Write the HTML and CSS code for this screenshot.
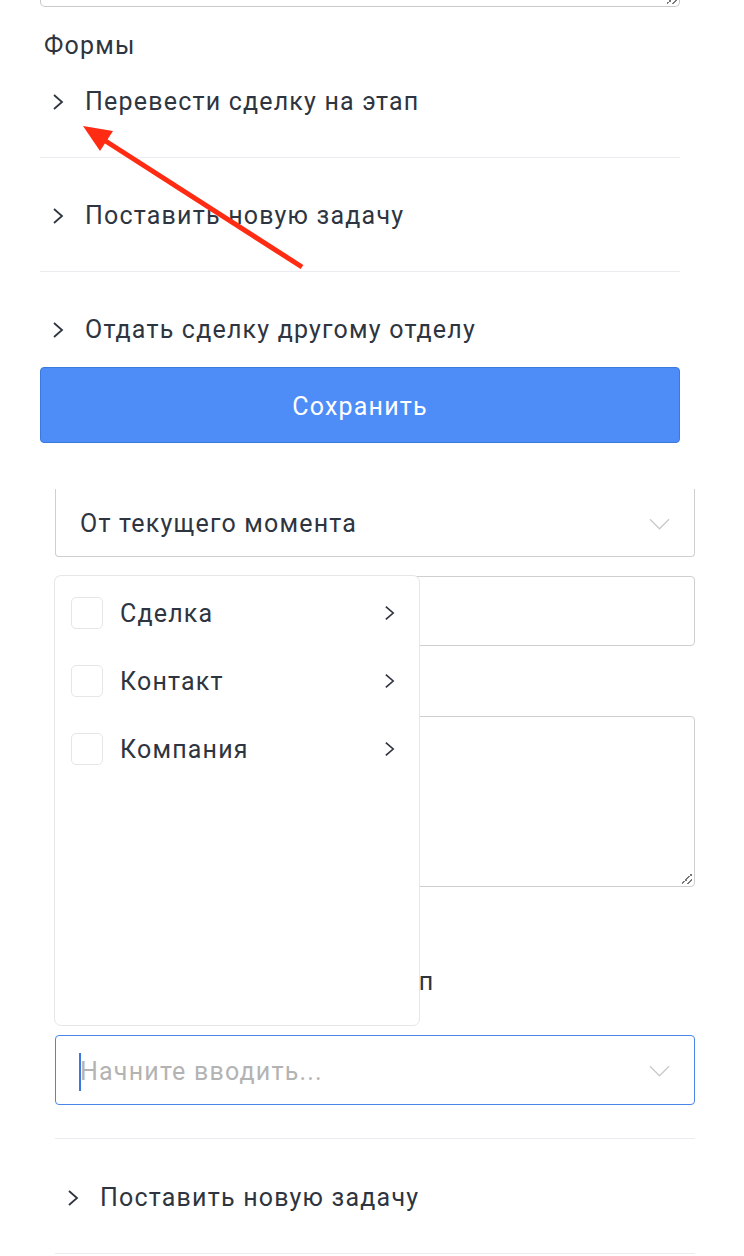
FILE: index.html
```html
<!DOCTYPE html>
<html lang="ru">
<head>
    <meta charset="UTF-8">
    <meta name="viewport" content="width=device-width, initial-scale=1.0">
    <title>Формы</title>
    <link rel="stylesheet" href="styles.css">
</head>
<body>
<div class="page">

    <!-- upper part: forms list with save button -->
    <div class="forms-top">
        <div class="textarea-end"><span class="grip"></span></div>

        <div class="forms-title">Формы</div>

        <div class="acc-list">
            <div class="acc-item">
                <svg class="chev" viewBox="0 0 12 18"><polyline points="2,2 10,9 2,16"/></svg>
                <span>Перевести сделку на этап</span>
            </div>
            <div class="acc-item">
                <svg class="chev" viewBox="0 0 12 18"><polyline points="2,2 10,9 2,16"/></svg>
                <span>Поставить новую задачу</span>
            </div>
            <div class="acc-item">
                <svg class="chev" viewBox="0 0 12 18"><polyline points="2,2 10,9 2,16"/></svg>
                <span>Отдать сделку другому отделу</span>
            </div>
        </div>

        <button class="btn-save">Сохранить</button>
    </div>

    <!-- lower part: open form with field picker -->
    <div class="form-block">
        <div class="field select cut">
            <span>От текущего момента</span>
            <svg class="caret" viewBox="0 0 22 12"><polyline points="1,1 11,11 21,1"/></svg>
        </div>

        <div class="field input"></div>

        <div class="field area"><span class="grip"></span></div>

        <div class="acc-item inner">
            <svg class="chev" viewBox="0 0 12 18"><polyline points="2,2 10,9 2,16"/></svg>
            <span>Перевести сделку на этап</span>
        </div>

        <div class="field select focus">
            <span class="cursor"></span>
            <span class="placeholder">Начните вводить...</span>
            <svg class="caret" viewBox="0 0 22 12"><polyline points="1,1 11,11 21,1"/></svg>
        </div>

        <div class="acc-list lower">
            <div class="acc-item">
                <svg class="chev" viewBox="0 0 12 18"><polyline points="2,2 10,9 2,16"/></svg>
                <span>Поставить новую задачу</span>
            </div>
        </div>

        <div class="picker">
            <div class="picker-row">
                <span class="box"></span>
                <span class="picker-label">Сделка</span>
                <svg class="chev small" viewBox="0 0 12 18"><polyline points="2,2 10,9 2,16"/></svg>
            </div>
            <div class="picker-row">
                <span class="box"></span>
                <span class="picker-label">Контакт</span>
                <svg class="chev small" viewBox="0 0 12 18"><polyline points="2,2 10,9 2,16"/></svg>
            </div>
            <div class="picker-row">
                <span class="box"></span>
                <span class="picker-label">Компания</span>
                <svg class="chev small" viewBox="0 0 12 18"><polyline points="2,2 10,9 2,16"/></svg>
            </div>
        </div>
    </div>

    <!-- annotation arrow -->
    <svg class="arrow" width="744" height="300" viewBox="0 0 744 300">
        <line x1="302" y1="267" x2="104" y2="140"/>
        <polygon points="83,126 113,131 100,151"/>
    </svg>
</div>
</body>
</html>
```

FILE: styles.css
```css
body {
    margin: 0;
    font-family: Roboto, "Noto Sans", sans-serif;
    font-size: 25px;
    letter-spacing: 1.2px;
    color: #2e3540;
    background: #fff;
}

.page {
    position: relative;
    width: 744px;
    height: 1256px;
    overflow: hidden;
}

/* upper part */
.forms-top {
    margin-left: 40px;
    width: 640px;
}

.textarea-end {
    position: relative;
    height: 6px;
    border: 1px solid #c9c9c9;
    border-top: none;
    border-radius: 0 0 5px 5px;
}

.grip {
    position: absolute;
    right: 2px;
    bottom: 2px;
    width: 10px;
    height: 10px;
    background: linear-gradient(135deg, transparent 45%, #777 45%, #777 55%, transparent 55%, transparent 72%, #777 72%, #777 82%, transparent 82%);
}

.forms-title {
    margin-top: 24px;
    padding-left: 4px;
    line-height: 30px;
}

.acc-item {
    display: flex;
    align-items: center;
    padding: 43px 0 40px;
    line-height: 30px;
    border-bottom: 1px solid #ebebf0;
}

.acc-list .acc-item:first-child {
    padding-top: 26px;
}

.forms-top .acc-item:last-child {
    border-bottom: none;
    padding-bottom: 22px;
}

.chev {
    width: 12px;
    height: 20px;
    margin: 0 21px 0 12px;
    fill: none;
    stroke: #2e3540;
    stroke-width: 1.8;
}

.btn-save {
    display: block;
    width: 640px;
    height: 76px;
    padding-top: 3px;
    background: #4e8df7;
    border: 1px solid #3c79dc;
    border-radius: 4px;
    color: #fff;
    font-family: inherit;
    font-size: 25px;
    letter-spacing: 1.2px;
}

/* lower part */
.form-block {
    position: relative;
    margin: 46px 0 0 55px;
    width: 640px;
}

.field {
    position: relative;
    display: flex;
    align-items: center;
    box-sizing: border-box;
    height: 70px;
    padding: 0 24px;
    border: 1px solid #cfcfcf;
    border-radius: 4px;
}

.field.cut {
    height: 68px;
    padding-top: 2px;
    border-top: none;
    border-radius: 0 0 4px 4px;
}

.field.input {
    margin-top: 19px;
}

.field.area {
    margin-top: 70px;
    height: 171px;
}

.caret {
    margin-left: auto;
    width: 21px;
    height: 12px;
    fill: none;
    stroke: #c9c9c9;
    stroke-width: 1.3;
}

.acc-item.inner {
    padding: 80px 0 0;
    border-bottom: none;
}

.field.focus {
    margin-top: 38px;
    padding-top: 2px;
    border-color: #4a86e8;
}

.cursor {
    position: absolute;
    left: 23px;
    top: 17px;
    width: 2px;
    height: 38px;
    background: #3b77e0;
}

.placeholder {
    color: #b3b3b3;
}

.acc-list.lower {
    margin-top: 33px;
    border-top: 1px solid #ebebf0;
}

.acc-list.lower .acc-item:first-child {
    padding-top: 44px;
}

/* field picker dropdown */
.picker {
    position: absolute;
    left: -1px;
    top: 86px;
    width: 366px;
    height: 451px;
    box-sizing: border-box;
    padding-top: 3px;
    background: #fff;
    border: 1px solid #e6e6e6;
    border-radius: 7px;
}

.picker-row {
    display: flex;
    align-items: center;
    height: 68px;
    padding-left: 16px;
}

.box {
    width: 30px;
    height: 30px;
    border: 1px solid #e6e6e6;
    border-radius: 5px;
    margin-right: 17px;
}

.picker-label {
    flex: 1;
}

.chev.small {
    margin: 0 24px 0 0;
    width: 11px;
}

.arrow {
    position: absolute;
    left: 0;
    top: 0;
}

.arrow line {
    stroke: #ff2b12;
    stroke-width: 5;
}

.arrow polygon {
    fill: #ff2b12;
}
```
